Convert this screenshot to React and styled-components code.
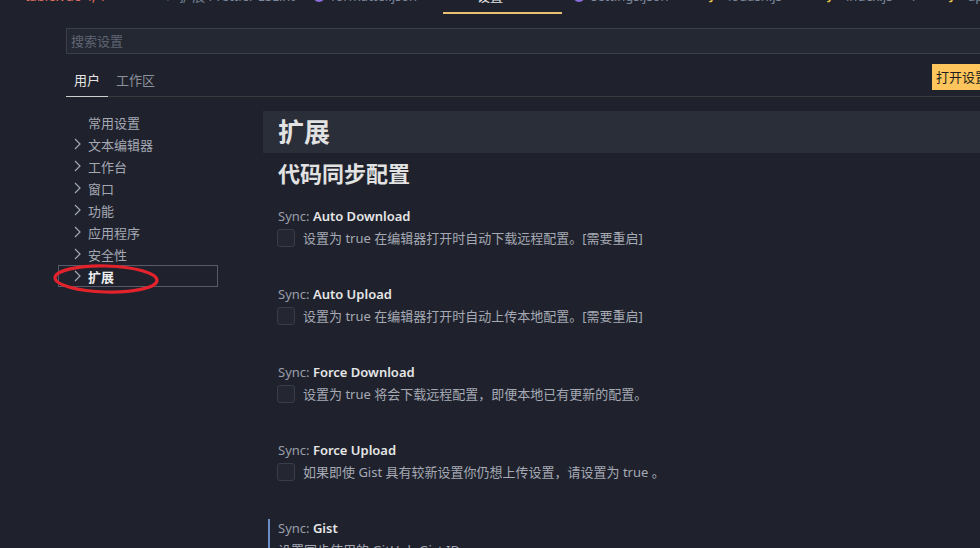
import React from "react";
import styled, { createGlobalStyle } from "styled-components";

const GlobalStyle = createGlobalStyle`
  html, body { margin: 0; padding: 0; background: #1f222d; overflow: hidden; }
  body { font-family: "Noto Sans", "Noto Sans CJK SC", sans-serif; }
  * { box-sizing: border-box; }
`;

const Page = styled.div`
  width: 980px;
  height: 548px;
  overflow: hidden;
  background: #1f222d;
  color: #a7abb5;
  font-size: 13px;
`;

/* ---------- editor tab strip (cut at top) ---------- */
const TabStrip = styled.div`
  height: 14px;
  overflow: hidden;
  display: flex;
  align-items: flex-end;
  white-space: nowrap;
`;

const Tab = styled.div`
  flex-shrink: 0;
  width: ${(p) => p.$w}px;
  height: 35px;
  padding-left: ${(p) => p.$pl}px;
  display: flex;
  align-items: center;
  gap: 6px;
  font-size: 13px;
  color: ${(p) => (p.$error ? "#e0705f" : p.$active ? "#e6e6e6" : "#7c879c")};
  border-bottom: 2px solid ${(p) => (p.$active ? "#e7c173" : "transparent")};
`;

const FileIcon = styled.span`
  display: inline-block;
  width: 12px;
  height: 12px;
  border-radius: ${(p) => (p.$round ? "50%" : "2px")};
  border: ${(p) => (p.$round ? `2px solid ${p.$c}` : "none")};
  color: ${(p) => p.$c};
  font-size: 11px;
  font-weight: 700;
  line-height: 12px;
`;

const Dot = styled.span`
  color: #5fbf6a;
  font-size: 13px;
  margin-right: 6px;
`;

const Close = styled.span`
  margin-left: auto;
  margin-right: 14px;
  color: #d0d0d0;
`;

/* ---------- settings header ---------- */
const Header = styled.div`
  padding-left: 66px;
`;

const SearchBox = styled.input`
  display: block;
  margin-top: 14px;
  width: 100%;
  height: 26px;
  background: #242833;
  border: 1px solid #3a3e4a;
  border-right: none;
  outline: none;
  padding: 0 4px;
  font-family: "Noto Sans", "Noto Sans CJK SC", sans-serif;
  font-size: 13px;
  color: #ccc;
  &::placeholder { color: #5f6472; }
`;

const ScopeRow = styled.div`
  margin-top: 10px;
  height: 33px;
  display: flex;
  align-items: flex-start;
  border-bottom: 1px solid #3a3b40;
`;

const ScopeTab = styled.div`
  height: 33px;
  line-height: 32px;
  padding: 0 8px;
  font-size: 13px;
  color: ${(p) => (p.$active ? "#e4e4e4" : "#8d919b")};
  border-bottom: 1px solid ${(p) => (p.$active ? "#cfcfcf" : "transparent")};
`;

const Spacer = styled.div`
  flex: 1;
`;

const JsonButton = styled.div`
  width: 48px;
  height: 26px;
  overflow: hidden;
  white-space: nowrap;
  background: #fdc55c;
  color: #1e1e1e;
  padding-left: 4px;
  line-height: 26px;
  font-size: 13px;
`;

/* ---------- body ---------- */
const Body = styled.div`
  display: grid;
  grid-template-columns: 160px 1fr;
  column-gap: 45px;
  padding-left: 58px;
`;

const Nav = styled.div`
  padding-top: 14px;
`;

const NavItem = styled.div`
  position: relative;
  height: 22px;
  display: flex;
  align-items: center;
  gap: 1px;
  padding-left: 12px;
  border: 1px solid ${(p) => (p.$selected ? "#575b69" : "transparent")};
  color: ${(p) => (p.$selected ? "#eeeeee" : "#a4a8b2")};
  font-weight: ${(p) => (p.$selected ? 700 : 400)};
  font-size: 13px;
`;

const ChevronBox = styled.span`
  width: 16px;
  height: 16px;
  display: inline-flex;
`;

const Annotation = styled.svg`
  position: absolute;
  left: -6px;
  top: -4px;
  pointer-events: none;
`;

const Content = styled.div`
  padding-top: 14px;
`;

const CategoryBand = styled.div`
  height: 42px;
  line-height: 42px;
  background: #2a2e39;
  padding-left: 15px;
  font-size: 26px;
  font-weight: 700;
  color: #e2e2e2;
`;

const SubHeading = styled.div`
  margin-top: 5px;
  padding-left: 15px;
  height: 30px;
  line-height: 30px;
  font-size: 22px;
  font-weight: 700;
  color: #e2e2e2;
`;

const SettingList = styled.div`
  margin-top: 19px;
`;

const Setting = styled.div`
  height: 78px;
  margin-left: 5px;
  padding-left: 8px;
  border-left: 2px solid ${(p) => (p.$focused ? "#6b8cc4" : "transparent")};
`;

const Title = styled.div`
  height: 18px;
  line-height: 18px;
  font-size: 13px;
  color: #9a9ea8;
  white-space: nowrap;
`;

const TitleKey = styled.span`
  color: #e6e6e6;
  font-weight: 600;
`;

const ValueRow = styled.div`
  margin-top: 4px;
  display: flex;
  align-items: center;
  gap: 8px;
`;

const Checkbox = styled.div`
  width: 18px;
  height: 18px;
  margin-left: -1px;
  border: 1px solid #393d4a;
  background: #242732;
  border-radius: 3px;
  flex-shrink: 0;
`;

const Desc = styled.div`
  font-size: 13px;
  line-height: 18px;
  color: #a5a9b3;
  white-space: nowrap;
`;

const Chevron = () => (
  <svg width="16" height="16" viewBox="0 0 16 16">
    <path d="M4 3l5 5-5 5" fill="none" stroke="#a4a8b2" strokeWidth="1.2" />
  </svg>
);

const tabs = [
  { w: 143, pl: 8, dot: true, label: "table.vue 4, 1", error: true },
  { w: 152, pl: 20, icon: { c: "#7c879c", t: "⚙" }, label: "扩展 Prettier ESLint" },
  { w: 148, pl: 18, icon: { c: "#8c6ee0", round: true }, label: "formatter.json" },
  { w: 119, pl: 34, label: "设置", active: true, close: true },
  { w: 133, pl: 11, icon: { c: "#8c6ee0", round: true }, label: "settings.json" },
  { w: 117, pl: 15, icon: { c: "#e8c547", t: "JS" }, label: "lodash.js ···" },
  { w: 123, pl: 16, icon: { c: "#e8c547", t: "JS" }, label: "index.js ···  1" },
  { w: 80, pl: 15, icon: { c: "#e8c547", t: "JS" }, label: "api.js" },
];

const navItems = ["常用设置", "文本编辑器", "工作台", "窗口", "功能", "应用程序", "安全性", "扩展"];

const settings = [
  { key: "Auto Download", desc: "设置为 true 在编辑器打开时自动下载远程配置。[需要重启]", check: true },
  { key: "Auto Upload", desc: "设置为 true 在编辑器打开时自动上传本地配置。[需要重启]", check: true },
  { key: "Force Download", desc: "设置为 true 将会下载远程配置，即便本地已有更新的配置。", check: true },
  { key: "Force Upload", desc: "如果即使 Gist 具有较新设置你仍想上传设置，请设置为 true 。", check: true },
  { key: "Gist", desc: "设置同步使用的 GitHub Gist ID", check: false, focused: true },
];

export default function App() {
  return (
    <Page>
      <GlobalStyle />
      <TabStrip>
        {tabs.map((t, i) => (
          <Tab key={i} $w={t.w} $pl={t.pl} $active={t.active} $error={t.error}>
            {t.dot && <Dot>•</Dot>}
            {t.icon && (
              <FileIcon $c={t.icon.c} $round={t.icon.round}>
                {t.icon.t}
              </FileIcon>
            )}
            <span>{t.label}</span>
            {t.close && <Close>×</Close>}
          </Tab>
        ))}
      </TabStrip>

      <Header>
        <SearchBox placeholder="搜索设置" readOnly />
        <ScopeRow>
          <ScopeTab $active>用户</ScopeTab>
          <ScopeTab>工作区</ScopeTab>
          <Spacer />
          <JsonButton>打开设置 (json)</JsonButton>
        </ScopeRow>
      </Header>

      <Body>
        <Nav>
          {navItems.map((n, i) => {
            const selected = i === navItems.length - 1;
            return (
              <NavItem key={n} $selected={selected}>
                <ChevronBox>{i > 0 && <Chevron />}</ChevronBox>
                {n}
                {selected && (
                  <Annotation width="112" height="36" viewBox="0 0 112 36">
                    <ellipse cx="53" cy="17" rx="51" ry="13" fill="none" stroke="#e3232b" strokeWidth="3.2" transform="rotate(1.5 53 17)" />
                  </Annotation>
                )}
              </NavItem>
            );
          })}
        </Nav>

        <Content>
          <CategoryBand>扩展</CategoryBand>
          <SubHeading>代码同步配置</SubHeading>
          <SettingList>
            {settings.map((s) => (
              <Setting key={s.key} $focused={s.focused}>
                <Title>
                  Sync: <TitleKey>{s.key}</TitleKey>
                </Title>
                <ValueRow>
                  {s.check && <Checkbox />}
                  <Desc>{s.desc}</Desc>
                </ValueRow>
              </Setting>
            ))}
          </SettingList>
        </Content>
      </Body>
    </Page>
  );
}
